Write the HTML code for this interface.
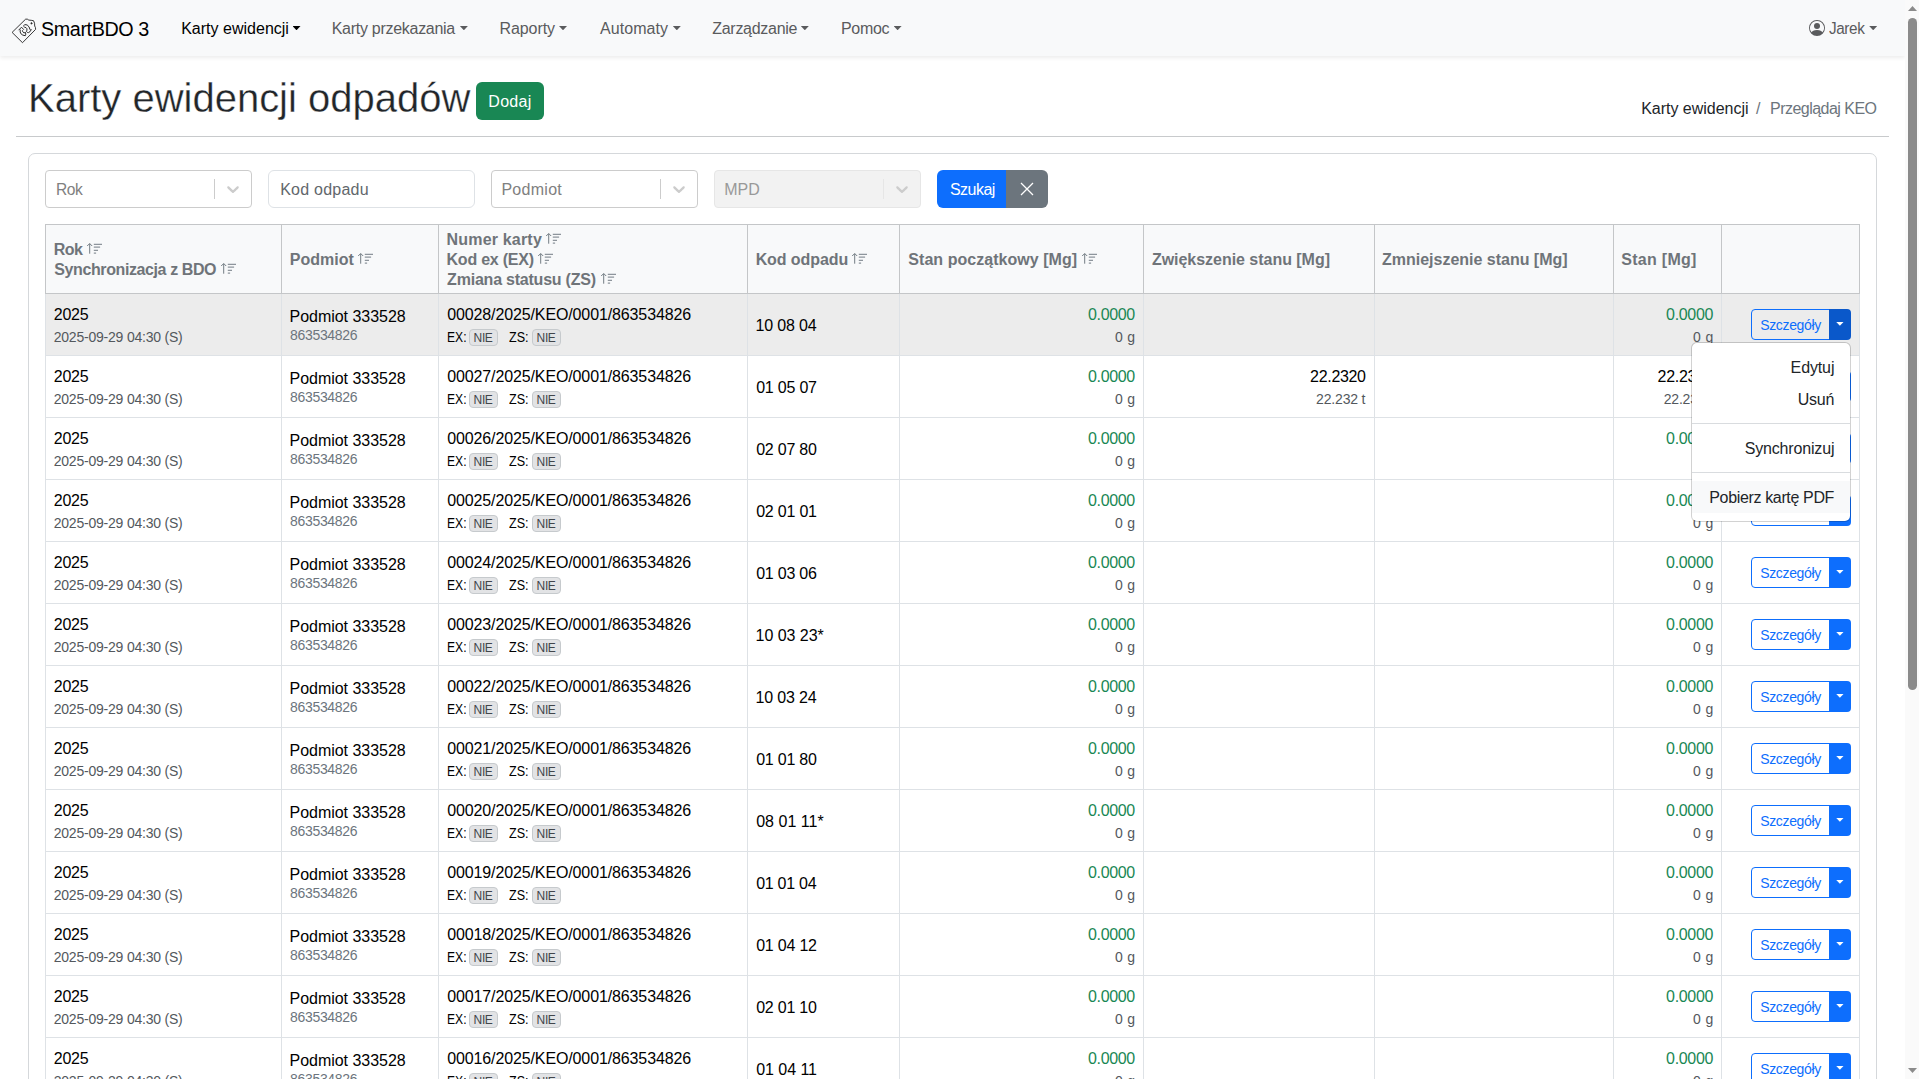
<!DOCTYPE html>
<html lang="pl"><head><meta charset="utf-8"><title>SmartBDO 3</title>
<style>
*{box-sizing:border-box}
html,body{margin:0;padding:0}
body{width:1919px;height:1079px;overflow:hidden;position:relative;background:#fff;font-family:"Liberation Sans",Arial,sans-serif;font-size:16px;color:#212529;line-height:1.5}
.t{position:absolute;white-space:nowrap}
.nav{position:absolute;left:0;top:0;width:1905px;height:56px;background:#f8f9fa;box-shadow:0 2px 4px rgba(0,0,0,.075)}
.nav .t{color:#5a5b5d}
.nav .brand{color:#000}
.nav .act{color:#000}
.car{position:absolute;top:26px;width:8px;height:4.2px;background:#5a5b5d;clip-path:polygon(0 0,100% 0,50% 100%)}
.car.act{background:#000}
.logo{position:absolute;left:0;top:0;width:48px;height:56px}
.usr{position:absolute;left:1809px;top:20px;width:16px;height:16px;fill:#5a5b5d}
h1{margin:0;font-weight:400;color:#212529;-webkit-text-stroke:.35px #fff}
.dodaj{position:absolute;left:476px;top:82px;width:68px;height:38px;background:#198754;border-radius:6px;color:#fff}
.dodaj .t{color:#fff}
.bc .t{color:#6c757d}
.bc .b{color:#212529}
.hr{position:absolute;left:16px;top:136px;width:1873px;height:1px;background:#c8cacc}
.card{position:absolute;left:28px;top:153px;width:1849px;height:960px;border:1px solid #d5d8db;border-radius:7px;background:#fff}
.f{position:absolute;top:170px;height:38px;width:207px;border:1px solid #ccc;border-radius:4px;background:#fff}
.f .t{color:#808080}
.f.inp{border-color:#dee2e6;border-radius:6px}
.f.inp .t{color:#62676c}
.f.dis{background:#f2f2f2;border-color:#e6e6e6}
.f.dis .t{color:#999}
.f .sep{position:absolute;left:168px;top:8px;width:1px;height:20px;background:#ccc}
.f.dis .sep{background:#e6e6e6}
.f svg{position:absolute;left:177px;top:8px;width:20px;height:20px;fill:#ccc}
.f.dis svg{fill:#ccc}
.szukaj{position:absolute;left:937px;top:170px;width:70px;height:38px;background:#0d6efd;border-radius:6px 0 0 6px}
.szukaj .t{color:#fff}
.xbtn{position:absolute;left:1006px;top:170px;width:42px;height:38px;background:#6c757d;border-radius:0 6px 6px 0}
.xbtn svg{position:absolute;left:13px;top:11px;width:16px;height:16px}
table{position:absolute;left:45px;top:224px;border-collapse:collapse;table-layout:fixed}
th,td{border:1px solid #dee2e6;padding:0;position:relative;text-align:left;font-weight:400;color:#000}
th{height:69px;background:#f8f9fa;border-color:#c4c6c8}
th .t{color:#6f7479;font-weight:700}
td{height:62px}
tr.hov td{background:#ececec}
.si{position:absolute;width:16px;height:12px;fill:none;stroke:#6c757d;stroke-width:.95}
.m{color:#53585d}
.m2{color:#6c757d}
.g{color:#198754}
.k{color:#000}
.bd{position:absolute;width:28.6px;height:16.4px;border:1px solid #c6cacd;background:#e2e3e5;border-radius:4px}
.bt{color:#41464b}
.bl{position:absolute;width:79px;height:31px;border:1px solid #0d6efd;border-radius:4px 0 0 4px;background:#fff}
.bl-t{color:#0d6efd}
.br{position:absolute;width:22px;height:31px;background:#0d6efd;border-radius:0 4px 4px 0}
.br i{position:absolute;left:6.8px;top:12.6px;width:8.2px;height:4.2px;background:#fff;clip-path:polygon(0 0,100% 0,50% 100%)}
tr.hov .br{background:#0a58ca}
tr.hov .bl{background:#ececec}
.menu{position:absolute;left:1691px;top:342px;width:160px;height:180px;background:#fff;background-clip:padding-box;border:1px solid rgba(0,0,0,.175);border-radius:6px}
.menu hr{position:absolute;left:0;width:158px;margin:0;border:0;border-top:1px solid #d9dcdf}
.menu .hl{position:absolute;left:0;top:138px;width:158px;height:32px;background:#f8f9fa}
.sb{position:absolute;left:1905px;top:0;width:14px;height:1079px;background:#fafafa}
.sb .th{position:absolute;left:3px;top:18px;width:9px;height:672px;border-radius:5px;background:#8b8b8b}
.sb .up{position:absolute;left:3px;top:6px;width:9px;height:5px;background:#8b8b8b;clip-path:polygon(50% 0,100% 100%,0 100%)}
.sb .dn{position:absolute;left:3px;top:1068px;width:9px;height:5px;background:#8b8b8b;clip-path:polygon(0 0,100% 0,50% 100%)}
</style></head><body>
<div class="nav">
<svg class="logo" viewBox="0 0 48 56" fill="none" stroke="#222" stroke-width=".9" stroke-linejoin="round"><path d="M12.1 32.4 25.6 19.2q1.8-.6 3.2 .9 2.4 .1 4.7 .6 1.500 2.400 1.200 5.300 1.100 1.500 .9 3.400L22.500 42.700z"/><path d="M30.600 23.300l.9-.9 .9 .9-.9 .9z" fill="#222" stroke-width=".6"/><path d="M18.600 30.200 21.500 27.200l2.300 2.500M20.200 29.600q-.3 2.600 .6 4.000 1.800 2.000 4.500 2.100 .8-1.400 .2-3.300M22.400 30.300q.1 1.800 1.500 2.600l1.600-.4M23.800 26.700q-.2-1.600 .9-2.100 2.700-.4 4.300 2.200l.8 2.200 .9 1.400M31.400 29.300l-.7 1.100q-.6 1.700-2.200 2.200-1.300 .1-2.000-1.100M24.300 27.200q2.200 .2 2.600 1.500 .3 1.500-.5 2.800" stroke-width=".95"/></svg>
<span class="t brand" style="left:41.3px;top:14px;letter-spacing:-0.4px;font-size:20px;line-height:30px;transform-origin:0 0;transform:scaleX(0.987);">SmartBDO 3</span>
<span class="t act" style="left:181.19px;top:17px;letter-spacing:0.01px;line-height:24px;">Karty ewidencji</span>
<i class="car act" style="left:292.5px"></i>
<span class="t" style="left:331.69px;top:17px;letter-spacing:-0.28px;line-height:24px;">Karty przekazania</span>
<i class="car" style="left:459.9px"></i>
<span class="t" style="left:499.49px;top:17px;letter-spacing:-0.08px;line-height:24px;">Raporty</span>
<i class="car" style="left:559px"></i>
<span class="t" style="left:599.97px;top:17px;letter-spacing:0.07px;line-height:24px;">Automaty</span>
<i class="car" style="left:672.8px"></i>
<span class="t" style="left:712.29px;top:17px;letter-spacing:-0.29px;line-height:24px;">Zarządzanie</span>
<i class="car" style="left:800.8px"></i>
<span class="t" style="left:840.89px;top:17px;letter-spacing:-0.27px;line-height:24px;">Pomoc</span>
<i class="car" style="left:893.6px"></i>
<span class="t" style="left:1829.16px;top:17px;letter-spacing:-0.4px;line-height:24px;transform-origin:0 0;transform:scaleX(0.954);">Jarek</span>
<i class="car" style="left:1869.2px"></i>
<svg class="usr" viewBox="0 0 16 16"><path d="M11 6a3 3 0 1 1-6 0 3 3 0 0 1 6 0"/><path fill-rule="evenodd" d="M0 8a8 8 0 1 1 16 0A8 8 0 0 1 0 8m8-7a7 7 0 0 0-5.468 11.37C3.242 11.226 4.805 10 8 10s4.757 1.225 5.468 2.37A7 7 0 0 0 8 1"/></svg>
</div>
<h1 class="t" style="left:28.02px;top:74px;letter-spacing:-0.01px;font-size:40px;line-height:48px;">Karty ewidencji odpadów</h1>
<div class="dodaj"><span class="t" style="left:12.29px;top:8px;letter-spacing:0.3px;line-height:24px;">Dodaj</span></div>
<div class="bc"><span class="t b" style="left:1641.19px;top:97px;letter-spacing:-0.02px;line-height:24px;">Karty ewidencji</span><span class="t" style="left:1755.9px;top:97px;letter-spacing:0px;line-height:24px;">/</span><span class="t" style="left:1769.99px;top:97px;letter-spacing:-0.52px;line-height:24px;">Przeglądaj KEO</span></div>
<div class="hr"></div>
<div class="card"></div>
<div class="f" style="left:45px"><span class="t" style="left:9.63px;top:7px;letter-spacing:-0.4px;line-height:24px;transform-origin:0 0;transform:scaleX(0.971);">Rok</span><span class="sep"></span><svg viewBox="0 0 20 20"><path d="M4.516 7.548c0.436-0.446 1.043-0.481 1.576 0l3.908 3.747 3.908-3.747c0.533-0.481 1.141-0.446 1.574 0 0.436 0.445 0.408 1.197 0 1.615-0.406 0.418-4.695 4.502-4.695 4.502-0.217 0.223-0.502 0.335-0.787 0.335s-0.57-0.112-0.789-0.335c0 0-4.287-4.084-4.695-4.502s-0.436-1.17 0-1.615z"/></svg></div>
<div class="f inp" style="left:268px"><span class="t" style="left:11.19px;top:7px;letter-spacing:0.23px;line-height:24px;">Kod odpadu</span></div>
<div class="f" style="left:491px"><span class="t" style="left:9.39px;top:7px;letter-spacing:0.29px;line-height:24px;">Podmiot</span><span class="sep"></span><svg viewBox="0 0 20 20"><path d="M4.516 7.548c0.436-0.446 1.043-0.481 1.576 0l3.908 3.747 3.908-3.747c0.533-0.481 1.141-0.446 1.574 0 0.436 0.445 0.408 1.197 0 1.615-0.406 0.418-4.695 4.502-4.695 4.502-0.217 0.223-0.502 0.335-0.787 0.335s-0.57-0.112-0.789-0.335c0 0-4.287-4.084-4.695-4.502s-0.436-1.17 0-1.615z"/></svg></div>
<div class="f dis" style="left:714px"><span class="t" style="left:9.19px;top:7px;letter-spacing:0.01px;line-height:24px;">MPD</span><span class="sep"></span><svg viewBox="0 0 20 20"><path d="M4.516 7.548c0.436-0.446 1.043-0.481 1.576 0l3.908 3.747 3.908-3.747c0.533-0.481 1.141-0.446 1.574 0 0.436 0.445 0.408 1.197 0 1.615-0.406 0.418-4.695 4.502-4.695 4.502-0.217 0.223-0.502 0.335-0.787 0.335s-0.57-0.112-0.789-0.335c0 0-4.287-4.084-4.695-4.502s-0.436-1.17 0-1.615z"/></svg></div>
<div class="szukaj"><span class="t" style="left:12.97px;top:8px;letter-spacing:-0.54px;line-height:24px;">Szukaj</span></div>
<div class="xbtn"><svg viewBox="0 0 16 16" stroke="#fff" stroke-width="1.3" fill="none"><path d="M2 2l12 12M14 2 2 14"/></svg></div>
<table>
<colgroup><col style="width:236px"><col style="width:157px"><col style="width:309px"><col style="width:152px"><col style="width:244px"><col style="width:231px"><col style="width:239px"><col style="width:108px"><col style="width:138px"></colgroup>
<thead><tr><th><span class="t" style="left:7.73px;top:15px;letter-spacing:-0.54px;line-height:20px;">Rok</span><svg class="si" viewBox="0 0 16 12" style="left:40.9px;top:18.3px"><path d="M2.7 10.7V.8M.2 3 2.7 .5 5.2 3M6.8 1.3H15M6.8 4.1h6.3M6.8 7.3H11M6.8 10.1h2.3"/></svg><span class="t" style="left:8.34px;top:35px;letter-spacing:-0.4px;line-height:20px;">Synchronizacja z BDO</span><svg class="si" viewBox="0 0 16 12" style="left:174.7px;top:38.3px"><path d="M2.7 10.7V.8M.2 3 2.7 .5 5.2 3M6.8 1.3H15M6.8 4.1h6.3M6.8 7.3H11M6.8 10.1h2.3"/></svg></th><th><span class="t" style="left:7.73px;top:25px;letter-spacing:0.03px;line-height:20px;">Podmiot</span><svg class="si" viewBox="0 0 16 12" style="left:76.2px;top:28.3px"><path d="M2.7 10.7V.8M.2 3 2.7 .5 5.2 3M6.8 1.3H15M6.8 4.1h6.3M6.8 7.3H11M6.8 10.1h2.3"/></svg></th><th><span class="t" style="left:7.53px;top:5px;letter-spacing:0.19px;line-height:20px;">Numer karty</span><svg class="si" viewBox="0 0 16 12" style="left:107.3px;top:8.3px"><path d="M2.7 10.7V.8M.2 3 2.7 .5 5.2 3M6.8 1.3H15M6.8 4.1h6.3M6.8 7.3H11M6.8 10.1h2.3"/></svg><span class="t" style="left:7.53px;top:25px;letter-spacing:-0.22px;line-height:20px;">Kod ex (EX)</span><svg class="si" viewBox="0 0 16 12" style="left:99.2px;top:28.3px"><path d="M2.7 10.7V.8M.2 3 2.7 .5 5.2 3M6.8 1.3H15M6.8 4.1h6.3M6.8 7.3H11M6.8 10.1h2.3"/></svg><span class="t" style="left:8.12px;top:45px;letter-spacing:-0.22px;line-height:20px;">Zmiana statusu (ZS)</span><svg class="si" viewBox="0 0 16 12" style="left:161.7px;top:48.3px"><path d="M2.7 10.7V.8M.2 3 2.7 .5 5.2 3M6.8 1.3H15M6.8 4.1h6.3M6.8 7.3H11M6.8 10.1h2.3"/></svg></th><th><span class="t" style="left:7.63px;top:25px;letter-spacing:-0.08px;line-height:20px;">Kod odpadu</span><svg class="si" viewBox="0 0 16 12" style="left:104px;top:28.3px"><path d="M2.7 10.7V.8M.2 3 2.7 .5 5.2 3M6.8 1.3H15M6.8 4.1h6.3M6.8 7.3H11M6.8 10.1h2.3"/></svg></th><th><span class="t" style="left:8.34px;top:25px;letter-spacing:0.04px;line-height:20px;">Stan początkowy [Mg]</span><svg class="si" viewBox="0 0 16 12" style="left:182px;top:28.3px"><path d="M2.7 10.7V.8M.2 3 2.7 .5 5.2 3M6.8 1.3H15M6.8 4.1h6.3M6.8 7.3H11M6.8 10.1h2.3"/></svg></th><th><span class="t" style="left:7.92px;top:25px;letter-spacing:-0.03px;line-height:20px;">Zwiększenie stanu [Mg]</span></th><th><span class="t" style="left:7.02px;top:25px;letter-spacing:-0.01px;line-height:20px;">Zmniejszenie stanu [Mg]</span></th><th><span class="t" style="left:7.34px;top:25px;letter-spacing:0.27px;line-height:20px;">Stan [Mg]</span></th><th></th></tr></thead>
<tbody>
<tr class="hov"><td><span class="t" style="left:7.8px;top:9px;letter-spacing:-0.24px;line-height:24px;">2025</span><span class="t m" style="left:7.7px;top:33px;letter-spacing:-0.21px;font-size:14px;line-height:20px;">2025-09-29 04:30 (S)</span></td><td><span class="t" style="left:7.49px;top:11px;letter-spacing:-0.02px;line-height:24px;">Podmiot 333528</span><span class="t m2" style="left:7.99px;top:31px;letter-spacing:-0.31px;font-size:14px;line-height:20px;">863534826</span></td><td><span class="t" style="left:8.18px;top:9px;letter-spacing:-0.12px;line-height:24px;">00028/2025/KEO/0001/863534826</span><span class="t" style="left:7.81px;top:33px;font-size:14px;line-height:20px;transform-origin:0 0;transform:scaleX(0.864)">EX:</span><span class="bd" style="left:30.1px;top:35.4px"></span><span class="t bt" style="left:34.62px;top:36px;letter-spacing:-0.4px;font-size:12px;line-height:16px;">NIE</span><span class="t" style="left:70.3px;top:33px;font-size:14px;line-height:20px;transform-origin:0 0;transform:scaleX(0.897)">ZS:</span><span class="bd" style="left:93.1px;top:35.4px"></span><span class="t bt" style="left:97.62px;top:36px;letter-spacing:-0.4px;font-size:12px;line-height:16px;">NIE</span></td><td><span class="t" style="left:7.58px;top:20px;letter-spacing:-0.17px;line-height:24px;">10 08 04</span></td><td><span class="t g" style="left:187.97px;top:9px;letter-spacing:-0.34px;line-height:24px;">0.0000</span><span class="t m" style="left:214.95px;top:33px;letter-spacing:0.29px;font-size:14px;line-height:20px;">0 g</span></td><td></td><td></td><td><span class="t g" style="left:52.08px;top:9px;letter-spacing:-0.32px;line-height:24px;">0.0000</span><span class="t m" style="left:79.05px;top:33px;letter-spacing:0.34px;font-size:14px;line-height:20px;">0 g</span></td><td><span class="bl" style="left:29px;top:15px"></span><span class="br" style="left:107px;top:15px"><i></i></span><span class="t bl-t" style="left:38.26px;top:21px;letter-spacing:-0.36px;font-size:14px;line-height:21px;">Szczegóły</span></td></tr>
<tr><td><span class="t" style="left:7.8px;top:9px;letter-spacing:-0.24px;line-height:24px;">2025</span><span class="t m" style="left:7.7px;top:33px;letter-spacing:-0.21px;font-size:14px;line-height:20px;">2025-09-29 04:30 (S)</span></td><td><span class="t" style="left:7.49px;top:11px;letter-spacing:-0.02px;line-height:24px;">Podmiot 333528</span><span class="t m2" style="left:7.99px;top:31px;letter-spacing:-0.31px;font-size:14px;line-height:20px;">863534826</span></td><td><span class="t" style="left:8.18px;top:9px;letter-spacing:-0.12px;line-height:24px;">00027/2025/KEO/0001/863534826</span><span class="t" style="left:7.81px;top:33px;font-size:14px;line-height:20px;transform-origin:0 0;transform:scaleX(0.864)">EX:</span><span class="bd" style="left:30.1px;top:35.4px"></span><span class="t bt" style="left:34.62px;top:36px;letter-spacing:-0.4px;font-size:12px;line-height:16px;">NIE</span><span class="t" style="left:70.3px;top:33px;font-size:14px;line-height:20px;transform-origin:0 0;transform:scaleX(0.897)">ZS:</span><span class="bd" style="left:93.1px;top:35.4px"></span><span class="t bt" style="left:97.62px;top:36px;letter-spacing:-0.4px;font-size:12px;line-height:16px;">NIE</span></td><td><span class="t" style="left:8.17px;top:20px;letter-spacing:-0.21px;line-height:24px;">01 05 07</span></td><td><span class="t g" style="left:187.97px;top:9px;letter-spacing:-0.34px;line-height:24px;">0.0000</span><span class="t m" style="left:214.95px;top:33px;letter-spacing:0.29px;font-size:14px;line-height:20px;">0 g</span></td><td><span class="t k" style="left:166.1px;top:9px;letter-spacing:-0.32px;line-height:24px;">22.2320</span><span class="t m" style="left:172.1px;top:33px;letter-spacing:-0.17px;font-size:14px;line-height:20px;">22.232 t</span></td><td></td><td><span class="t k" style="left:43.6px;top:9px;letter-spacing:-0.32px;line-height:24px;">22.2320</span><span class="t m" style="left:49.7px;top:33px;letter-spacing:-0.18px;font-size:14px;line-height:20px;">22.232 t</span></td><td><span class="bl" style="left:29px;top:15px"></span><span class="br" style="left:107px;top:15px"><i></i></span><span class="t bl-t" style="left:38.26px;top:21px;letter-spacing:-0.36px;font-size:14px;line-height:21px;">Szczegóły</span></td></tr>
<tr><td><span class="t" style="left:7.8px;top:9px;letter-spacing:-0.24px;line-height:24px;">2025</span><span class="t m" style="left:7.7px;top:33px;letter-spacing:-0.21px;font-size:14px;line-height:20px;">2025-09-29 04:30 (S)</span></td><td><span class="t" style="left:7.49px;top:11px;letter-spacing:-0.02px;line-height:24px;">Podmiot 333528</span><span class="t m2" style="left:7.99px;top:31px;letter-spacing:-0.31px;font-size:14px;line-height:20px;">863534826</span></td><td><span class="t" style="left:8.18px;top:9px;letter-spacing:-0.12px;line-height:24px;">00026/2025/KEO/0001/863534826</span><span class="t" style="left:7.81px;top:33px;font-size:14px;line-height:20px;transform-origin:0 0;transform:scaleX(0.864)">EX:</span><span class="bd" style="left:30.1px;top:35.4px"></span><span class="t bt" style="left:34.62px;top:36px;letter-spacing:-0.4px;font-size:12px;line-height:16px;">NIE</span><span class="t" style="left:70.3px;top:33px;font-size:14px;line-height:20px;transform-origin:0 0;transform:scaleX(0.897)">ZS:</span><span class="bd" style="left:93.1px;top:35.4px"></span><span class="t bt" style="left:97.62px;top:36px;letter-spacing:-0.4px;font-size:12px;line-height:16px;">NIE</span></td><td><span class="t" style="left:8.17px;top:20px;letter-spacing:-0.23px;line-height:24px;">02 07 80</span></td><td><span class="t g" style="left:187.97px;top:9px;letter-spacing:-0.34px;line-height:24px;">0.0000</span><span class="t m" style="left:214.95px;top:33px;letter-spacing:0.29px;font-size:14px;line-height:20px;">0 g</span></td><td></td><td></td><td><span class="t g" style="left:52.08px;top:9px;letter-spacing:-0.32px;line-height:24px;">0.0000</span><span class="t m" style="left:79.05px;top:33px;letter-spacing:0.34px;font-size:14px;line-height:20px;">0 g</span></td><td><span class="bl" style="left:29px;top:15px"></span><span class="br" style="left:107px;top:15px"><i></i></span><span class="t bl-t" style="left:38.26px;top:21px;letter-spacing:-0.36px;font-size:14px;line-height:21px;">Szczegóły</span></td></tr>
<tr><td><span class="t" style="left:7.8px;top:9px;letter-spacing:-0.24px;line-height:24px;">2025</span><span class="t m" style="left:7.7px;top:33px;letter-spacing:-0.21px;font-size:14px;line-height:20px;">2025-09-29 04:30 (S)</span></td><td><span class="t" style="left:7.49px;top:11px;letter-spacing:-0.02px;line-height:24px;">Podmiot 333528</span><span class="t m2" style="left:7.99px;top:31px;letter-spacing:-0.31px;font-size:14px;line-height:20px;">863534826</span></td><td><span class="t" style="left:8.18px;top:9px;letter-spacing:-0.12px;line-height:24px;">00025/2025/KEO/0001/863534826</span><span class="t" style="left:7.81px;top:33px;font-size:14px;line-height:20px;transform-origin:0 0;transform:scaleX(0.864)">EX:</span><span class="bd" style="left:30.1px;top:35.4px"></span><span class="t bt" style="left:34.62px;top:36px;letter-spacing:-0.4px;font-size:12px;line-height:16px;">NIE</span><span class="t" style="left:70.3px;top:33px;font-size:14px;line-height:20px;transform-origin:0 0;transform:scaleX(0.897)">ZS:</span><span class="bd" style="left:93.1px;top:35.4px"></span><span class="t bt" style="left:97.62px;top:36px;letter-spacing:-0.4px;font-size:12px;line-height:16px;">NIE</span></td><td><span class="t" style="left:8.17px;top:20px;letter-spacing:-0.21px;line-height:24px;">02 01 01</span></td><td><span class="t g" style="left:187.97px;top:9px;letter-spacing:-0.34px;line-height:24px;">0.0000</span><span class="t m" style="left:214.95px;top:33px;letter-spacing:0.29px;font-size:14px;line-height:20px;">0 g</span></td><td></td><td></td><td><span class="t g" style="left:52.08px;top:9px;letter-spacing:-0.32px;line-height:24px;">0.0000</span><span class="t m" style="left:79.05px;top:33px;letter-spacing:0.34px;font-size:14px;line-height:20px;">0 g</span></td><td><span class="bl" style="left:29px;top:15px"></span><span class="br" style="left:107px;top:15px"><i></i></span><span class="t bl-t" style="left:38.26px;top:21px;letter-spacing:-0.36px;font-size:14px;line-height:21px;">Szczegóły</span></td></tr>
<tr><td><span class="t" style="left:7.8px;top:9px;letter-spacing:-0.24px;line-height:24px;">2025</span><span class="t m" style="left:7.7px;top:33px;letter-spacing:-0.21px;font-size:14px;line-height:20px;">2025-09-29 04:30 (S)</span></td><td><span class="t" style="left:7.49px;top:11px;letter-spacing:-0.02px;line-height:24px;">Podmiot 333528</span><span class="t m2" style="left:7.99px;top:31px;letter-spacing:-0.31px;font-size:14px;line-height:20px;">863534826</span></td><td><span class="t" style="left:8.18px;top:9px;letter-spacing:-0.12px;line-height:24px;">00024/2025/KEO/0001/863534826</span><span class="t" style="left:7.81px;top:33px;font-size:14px;line-height:20px;transform-origin:0 0;transform:scaleX(0.864)">EX:</span><span class="bd" style="left:30.1px;top:35.4px"></span><span class="t bt" style="left:34.62px;top:36px;letter-spacing:-0.4px;font-size:12px;line-height:16px;">NIE</span><span class="t" style="left:70.3px;top:33px;font-size:14px;line-height:20px;transform-origin:0 0;transform:scaleX(0.897)">ZS:</span><span class="bd" style="left:93.1px;top:35.4px"></span><span class="t bt" style="left:97.62px;top:36px;letter-spacing:-0.4px;font-size:12px;line-height:16px;">NIE</span></td><td><span class="t" style="left:8.17px;top:20px;letter-spacing:-0.22px;line-height:24px;">01 03 06</span></td><td><span class="t g" style="left:187.97px;top:9px;letter-spacing:-0.34px;line-height:24px;">0.0000</span><span class="t m" style="left:214.95px;top:33px;letter-spacing:0.29px;font-size:14px;line-height:20px;">0 g</span></td><td></td><td></td><td><span class="t g" style="left:52.08px;top:9px;letter-spacing:-0.32px;line-height:24px;">0.0000</span><span class="t m" style="left:79.05px;top:33px;letter-spacing:0.34px;font-size:14px;line-height:20px;">0 g</span></td><td><span class="bl" style="left:29px;top:15px"></span><span class="br" style="left:107px;top:15px"><i></i></span><span class="t bl-t" style="left:38.26px;top:21px;letter-spacing:-0.36px;font-size:14px;line-height:21px;">Szczegóły</span></td></tr>
<tr><td><span class="t" style="left:7.8px;top:9px;letter-spacing:-0.24px;line-height:24px;">2025</span><span class="t m" style="left:7.7px;top:33px;letter-spacing:-0.21px;font-size:14px;line-height:20px;">2025-09-29 04:30 (S)</span></td><td><span class="t" style="left:7.49px;top:11px;letter-spacing:-0.02px;line-height:24px;">Podmiot 333528</span><span class="t m2" style="left:7.99px;top:31px;letter-spacing:-0.31px;font-size:14px;line-height:20px;">863534826</span></td><td><span class="t" style="left:8.18px;top:9px;letter-spacing:-0.12px;line-height:24px;">00023/2025/KEO/0001/863534826</span><span class="t" style="left:7.81px;top:33px;font-size:14px;line-height:20px;transform-origin:0 0;transform:scaleX(0.864)">EX:</span><span class="bd" style="left:30.1px;top:35.4px"></span><span class="t bt" style="left:34.62px;top:36px;letter-spacing:-0.4px;font-size:12px;line-height:16px;">NIE</span><span class="t" style="left:70.3px;top:33px;font-size:14px;line-height:20px;transform-origin:0 0;transform:scaleX(0.897)">ZS:</span><span class="bd" style="left:93.1px;top:35.4px"></span><span class="t bt" style="left:97.62px;top:36px;letter-spacing:-0.4px;font-size:12px;line-height:16px;">NIE</span></td><td><span class="t" style="left:7.58px;top:20px;letter-spacing:-0.04px;line-height:24px;">10 03 23*</span></td><td><span class="t g" style="left:187.97px;top:9px;letter-spacing:-0.34px;line-height:24px;">0.0000</span><span class="t m" style="left:214.95px;top:33px;letter-spacing:0.29px;font-size:14px;line-height:20px;">0 g</span></td><td></td><td></td><td><span class="t g" style="left:52.08px;top:9px;letter-spacing:-0.32px;line-height:24px;">0.0000</span><span class="t m" style="left:79.05px;top:33px;letter-spacing:0.34px;font-size:14px;line-height:20px;">0 g</span></td><td><span class="bl" style="left:29px;top:15px"></span><span class="br" style="left:107px;top:15px"><i></i></span><span class="t bl-t" style="left:38.26px;top:21px;letter-spacing:-0.36px;font-size:14px;line-height:21px;">Szczegóły</span></td></tr>
<tr><td><span class="t" style="left:7.8px;top:9px;letter-spacing:-0.24px;line-height:24px;">2025</span><span class="t m" style="left:7.7px;top:33px;letter-spacing:-0.21px;font-size:14px;line-height:20px;">2025-09-29 04:30 (S)</span></td><td><span class="t" style="left:7.49px;top:11px;letter-spacing:-0.02px;line-height:24px;">Podmiot 333528</span><span class="t m2" style="left:7.99px;top:31px;letter-spacing:-0.31px;font-size:14px;line-height:20px;">863534826</span></td><td><span class="t" style="left:8.18px;top:9px;letter-spacing:-0.12px;line-height:24px;">00022/2025/KEO/0001/863534826</span><span class="t" style="left:7.81px;top:33px;font-size:14px;line-height:20px;transform-origin:0 0;transform:scaleX(0.864)">EX:</span><span class="bd" style="left:30.1px;top:35.4px"></span><span class="t bt" style="left:34.62px;top:36px;letter-spacing:-0.4px;font-size:12px;line-height:16px;">NIE</span><span class="t" style="left:70.3px;top:33px;font-size:14px;line-height:20px;transform-origin:0 0;transform:scaleX(0.897)">ZS:</span><span class="bd" style="left:93.1px;top:35.4px"></span><span class="t bt" style="left:97.62px;top:36px;letter-spacing:-0.4px;font-size:12px;line-height:16px;">NIE</span></td><td><span class="t" style="left:7.58px;top:20px;letter-spacing:-0.17px;line-height:24px;">10 03 24</span></td><td><span class="t g" style="left:187.97px;top:9px;letter-spacing:-0.34px;line-height:24px;">0.0000</span><span class="t m" style="left:214.95px;top:33px;letter-spacing:0.29px;font-size:14px;line-height:20px;">0 g</span></td><td></td><td></td><td><span class="t g" style="left:52.08px;top:9px;letter-spacing:-0.32px;line-height:24px;">0.0000</span><span class="t m" style="left:79.05px;top:33px;letter-spacing:0.34px;font-size:14px;line-height:20px;">0 g</span></td><td><span class="bl" style="left:29px;top:15px"></span><span class="br" style="left:107px;top:15px"><i></i></span><span class="t bl-t" style="left:38.26px;top:21px;letter-spacing:-0.36px;font-size:14px;line-height:21px;">Szczegóły</span></td></tr>
<tr><td><span class="t" style="left:7.8px;top:9px;letter-spacing:-0.24px;line-height:24px;">2025</span><span class="t m" style="left:7.7px;top:33px;letter-spacing:-0.21px;font-size:14px;line-height:20px;">2025-09-29 04:30 (S)</span></td><td><span class="t" style="left:7.49px;top:11px;letter-spacing:-0.02px;line-height:24px;">Podmiot 333528</span><span class="t m2" style="left:7.99px;top:31px;letter-spacing:-0.31px;font-size:14px;line-height:20px;">863534826</span></td><td><span class="t" style="left:8.18px;top:9px;letter-spacing:-0.12px;line-height:24px;">00021/2025/KEO/0001/863534826</span><span class="t" style="left:7.81px;top:33px;font-size:14px;line-height:20px;transform-origin:0 0;transform:scaleX(0.864)">EX:</span><span class="bd" style="left:30.1px;top:35.4px"></span><span class="t bt" style="left:34.62px;top:36px;letter-spacing:-0.4px;font-size:12px;line-height:16px;">NIE</span><span class="t" style="left:70.3px;top:33px;font-size:14px;line-height:20px;transform-origin:0 0;transform:scaleX(0.897)">ZS:</span><span class="bd" style="left:93.1px;top:35.4px"></span><span class="t bt" style="left:97.62px;top:36px;letter-spacing:-0.4px;font-size:12px;line-height:16px;">NIE</span></td><td><span class="t" style="left:8.17px;top:20px;letter-spacing:-0.23px;line-height:24px;">01 01 80</span></td><td><span class="t g" style="left:187.97px;top:9px;letter-spacing:-0.34px;line-height:24px;">0.0000</span><span class="t m" style="left:214.95px;top:33px;letter-spacing:0.29px;font-size:14px;line-height:20px;">0 g</span></td><td></td><td></td><td><span class="t g" style="left:52.08px;top:9px;letter-spacing:-0.32px;line-height:24px;">0.0000</span><span class="t m" style="left:79.05px;top:33px;letter-spacing:0.34px;font-size:14px;line-height:20px;">0 g</span></td><td><span class="bl" style="left:29px;top:15px"></span><span class="br" style="left:107px;top:15px"><i></i></span><span class="t bl-t" style="left:38.26px;top:21px;letter-spacing:-0.36px;font-size:14px;line-height:21px;">Szczegóły</span></td></tr>
<tr><td><span class="t" style="left:7.8px;top:9px;letter-spacing:-0.24px;line-height:24px;">2025</span><span class="t m" style="left:7.7px;top:33px;letter-spacing:-0.21px;font-size:14px;line-height:20px;">2025-09-29 04:30 (S)</span></td><td><span class="t" style="left:7.49px;top:11px;letter-spacing:-0.02px;line-height:24px;">Podmiot 333528</span><span class="t m2" style="left:7.99px;top:31px;letter-spacing:-0.31px;font-size:14px;line-height:20px;">863534826</span></td><td><span class="t" style="left:8.18px;top:9px;letter-spacing:-0.12px;line-height:24px;">00020/2025/KEO/0001/863534826</span><span class="t" style="left:7.81px;top:33px;font-size:14px;line-height:20px;transform-origin:0 0;transform:scaleX(0.864)">EX:</span><span class="bd" style="left:30.1px;top:35.4px"></span><span class="t bt" style="left:34.62px;top:36px;letter-spacing:-0.4px;font-size:12px;line-height:16px;">NIE</span><span class="t" style="left:70.3px;top:33px;font-size:14px;line-height:20px;transform-origin:0 0;transform:scaleX(0.897)">ZS:</span><span class="bd" style="left:93.1px;top:35.4px"></span><span class="t bt" style="left:97.62px;top:36px;letter-spacing:-0.4px;font-size:12px;line-height:16px;">NIE</span></td><td><span class="t" style="left:8.17px;top:20px;letter-spacing:0.03px;line-height:24px;">08 01 11*</span></td><td><span class="t g" style="left:187.97px;top:9px;letter-spacing:-0.34px;line-height:24px;">0.0000</span><span class="t m" style="left:214.95px;top:33px;letter-spacing:0.29px;font-size:14px;line-height:20px;">0 g</span></td><td></td><td></td><td><span class="t g" style="left:52.08px;top:9px;letter-spacing:-0.32px;line-height:24px;">0.0000</span><span class="t m" style="left:79.05px;top:33px;letter-spacing:0.34px;font-size:14px;line-height:20px;">0 g</span></td><td><span class="bl" style="left:29px;top:15px"></span><span class="br" style="left:107px;top:15px"><i></i></span><span class="t bl-t" style="left:38.26px;top:21px;letter-spacing:-0.36px;font-size:14px;line-height:21px;">Szczegóły</span></td></tr>
<tr><td><span class="t" style="left:7.8px;top:9px;letter-spacing:-0.24px;line-height:24px;">2025</span><span class="t m" style="left:7.7px;top:33px;letter-spacing:-0.21px;font-size:14px;line-height:20px;">2025-09-29 04:30 (S)</span></td><td><span class="t" style="left:7.49px;top:11px;letter-spacing:-0.02px;line-height:24px;">Podmiot 333528</span><span class="t m2" style="left:7.99px;top:31px;letter-spacing:-0.31px;font-size:14px;line-height:20px;">863534826</span></td><td><span class="t" style="left:8.18px;top:9px;letter-spacing:-0.12px;line-height:24px;">00019/2025/KEO/0001/863534826</span><span class="t" style="left:7.81px;top:33px;font-size:14px;line-height:20px;transform-origin:0 0;transform:scaleX(0.864)">EX:</span><span class="bd" style="left:30.1px;top:35.4px"></span><span class="t bt" style="left:34.62px;top:36px;letter-spacing:-0.4px;font-size:12px;line-height:16px;">NIE</span><span class="t" style="left:70.3px;top:33px;font-size:14px;line-height:20px;transform-origin:0 0;transform:scaleX(0.897)">ZS:</span><span class="bd" style="left:93.1px;top:35.4px"></span><span class="t bt" style="left:97.62px;top:36px;letter-spacing:-0.4px;font-size:12px;line-height:16px;">NIE</span></td><td><span class="t" style="left:8.17px;top:20px;letter-spacing:-0.26px;line-height:24px;">01 01 04</span></td><td><span class="t g" style="left:187.97px;top:9px;letter-spacing:-0.34px;line-height:24px;">0.0000</span><span class="t m" style="left:214.95px;top:33px;letter-spacing:0.29px;font-size:14px;line-height:20px;">0 g</span></td><td></td><td></td><td><span class="t g" style="left:52.08px;top:9px;letter-spacing:-0.32px;line-height:24px;">0.0000</span><span class="t m" style="left:79.05px;top:33px;letter-spacing:0.34px;font-size:14px;line-height:20px;">0 g</span></td><td><span class="bl" style="left:29px;top:15px"></span><span class="br" style="left:107px;top:15px"><i></i></span><span class="t bl-t" style="left:38.26px;top:21px;letter-spacing:-0.36px;font-size:14px;line-height:21px;">Szczegóły</span></td></tr>
<tr><td><span class="t" style="left:7.8px;top:9px;letter-spacing:-0.24px;line-height:24px;">2025</span><span class="t m" style="left:7.7px;top:33px;letter-spacing:-0.21px;font-size:14px;line-height:20px;">2025-09-29 04:30 (S)</span></td><td><span class="t" style="left:7.49px;top:11px;letter-spacing:-0.02px;line-height:24px;">Podmiot 333528</span><span class="t m2" style="left:7.99px;top:31px;letter-spacing:-0.31px;font-size:14px;line-height:20px;">863534826</span></td><td><span class="t" style="left:8.18px;top:9px;letter-spacing:-0.12px;line-height:24px;">00018/2025/KEO/0001/863534826</span><span class="t" style="left:7.81px;top:33px;font-size:14px;line-height:20px;transform-origin:0 0;transform:scaleX(0.864)">EX:</span><span class="bd" style="left:30.1px;top:35.4px"></span><span class="t bt" style="left:34.62px;top:36px;letter-spacing:-0.4px;font-size:12px;line-height:16px;">NIE</span><span class="t" style="left:70.3px;top:33px;font-size:14px;line-height:20px;transform-origin:0 0;transform:scaleX(0.897)">ZS:</span><span class="bd" style="left:93.1px;top:35.4px"></span><span class="t bt" style="left:97.62px;top:36px;letter-spacing:-0.4px;font-size:12px;line-height:16px;">NIE</span></td><td><span class="t" style="left:8.17px;top:20px;letter-spacing:-0.21px;line-height:24px;">01 04 12</span></td><td><span class="t g" style="left:187.97px;top:9px;letter-spacing:-0.34px;line-height:24px;">0.0000</span><span class="t m" style="left:214.95px;top:33px;letter-spacing:0.29px;font-size:14px;line-height:20px;">0 g</span></td><td></td><td></td><td><span class="t g" style="left:52.08px;top:9px;letter-spacing:-0.32px;line-height:24px;">0.0000</span><span class="t m" style="left:79.05px;top:33px;letter-spacing:0.34px;font-size:14px;line-height:20px;">0 g</span></td><td><span class="bl" style="left:29px;top:15px"></span><span class="br" style="left:107px;top:15px"><i></i></span><span class="t bl-t" style="left:38.26px;top:21px;letter-spacing:-0.36px;font-size:14px;line-height:21px;">Szczegóły</span></td></tr>
<tr><td><span class="t" style="left:7.8px;top:9px;letter-spacing:-0.24px;line-height:24px;">2025</span><span class="t m" style="left:7.7px;top:33px;letter-spacing:-0.21px;font-size:14px;line-height:20px;">2025-09-29 04:30 (S)</span></td><td><span class="t" style="left:7.49px;top:11px;letter-spacing:-0.02px;line-height:24px;">Podmiot 333528</span><span class="t m2" style="left:7.99px;top:31px;letter-spacing:-0.31px;font-size:14px;line-height:20px;">863534826</span></td><td><span class="t" style="left:8.18px;top:9px;letter-spacing:-0.12px;line-height:24px;">00017/2025/KEO/0001/863534826</span><span class="t" style="left:7.81px;top:33px;font-size:14px;line-height:20px;transform-origin:0 0;transform:scaleX(0.864)">EX:</span><span class="bd" style="left:30.1px;top:35.4px"></span><span class="t bt" style="left:34.62px;top:36px;letter-spacing:-0.4px;font-size:12px;line-height:16px;">NIE</span><span class="t" style="left:70.3px;top:33px;font-size:14px;line-height:20px;transform-origin:0 0;transform:scaleX(0.897)">ZS:</span><span class="bd" style="left:93.1px;top:35.4px"></span><span class="t bt" style="left:97.62px;top:36px;letter-spacing:-0.4px;font-size:12px;line-height:16px;">NIE</span></td><td><span class="t" style="left:8.17px;top:20px;letter-spacing:-0.23px;line-height:24px;">02 01 10</span></td><td><span class="t g" style="left:187.97px;top:9px;letter-spacing:-0.34px;line-height:24px;">0.0000</span><span class="t m" style="left:214.95px;top:33px;letter-spacing:0.29px;font-size:14px;line-height:20px;">0 g</span></td><td></td><td></td><td><span class="t g" style="left:52.08px;top:9px;letter-spacing:-0.32px;line-height:24px;">0.0000</span><span class="t m" style="left:79.05px;top:33px;letter-spacing:0.34px;font-size:14px;line-height:20px;">0 g</span></td><td><span class="bl" style="left:29px;top:15px"></span><span class="br" style="left:107px;top:15px"><i></i></span><span class="t bl-t" style="left:38.26px;top:21px;letter-spacing:-0.36px;font-size:14px;line-height:21px;">Szczegóły</span></td></tr>
<tr><td><span class="t" style="left:7.8px;top:9px;letter-spacing:-0.24px;line-height:24px;">2025</span><span class="t m" style="left:7.7px;top:33px;letter-spacing:-0.21px;font-size:14px;line-height:20px;">2025-09-29 04:30 (S)</span></td><td><span class="t" style="left:7.49px;top:11px;letter-spacing:-0.02px;line-height:24px;">Podmiot 333528</span><span class="t m2" style="left:7.99px;top:31px;letter-spacing:-0.31px;font-size:14px;line-height:20px;">863534826</span></td><td><span class="t" style="left:8.18px;top:9px;letter-spacing:-0.12px;line-height:24px;">00016/2025/KEO/0001/863534826</span><span class="t" style="left:7.81px;top:33px;font-size:14px;line-height:20px;transform-origin:0 0;transform:scaleX(0.864)">EX:</span><span class="bd" style="left:30.1px;top:35.4px"></span><span class="t bt" style="left:34.62px;top:36px;letter-spacing:-0.4px;font-size:12px;line-height:16px;">NIE</span><span class="t" style="left:70.3px;top:33px;font-size:14px;line-height:20px;transform-origin:0 0;transform:scaleX(0.897)">ZS:</span><span class="bd" style="left:93.1px;top:35.4px"></span><span class="t bt" style="left:97.62px;top:36px;letter-spacing:-0.4px;font-size:12px;line-height:16px;">NIE</span></td><td><span class="t" style="left:8.17px;top:20px;letter-spacing:-0.04px;line-height:24px;">01 04 11</span></td><td><span class="t g" style="left:187.97px;top:9px;letter-spacing:-0.34px;line-height:24px;">0.0000</span><span class="t m" style="left:214.95px;top:33px;letter-spacing:0.29px;font-size:14px;line-height:20px;">0 g</span></td><td></td><td></td><td><span class="t g" style="left:52.08px;top:9px;letter-spacing:-0.32px;line-height:24px;">0.0000</span><span class="t m" style="left:79.05px;top:33px;letter-spacing:0.34px;font-size:14px;line-height:20px;">0 g</span></td><td><span class="bl" style="left:29px;top:15px"></span><span class="br" style="left:107px;top:15px"><i></i></span><span class="t bl-t" style="left:38.26px;top:21px;letter-spacing:-0.36px;font-size:14px;line-height:21px;">Szczegóły</span></td></tr>
</tbody></table>
<div class="menu">
<div class="hl"></div>
<span class="t" style="left:98.59px;top:13px;letter-spacing:-0.12px;line-height:24px;">Edytuj</span>
<span class="t" style="left:105.67px;top:45px;letter-spacing:-0.2px;line-height:24px;">Usuń</span>
<span class="t" style="left:52.67px;top:94px;letter-spacing:-0.16px;line-height:24px;">Synchronizuj</span>
<span class="t" style="left:17.29px;top:143px;letter-spacing:-0.35px;line-height:24px;">Pobierz kartę PDF</span>
<hr style="top:80px">
<hr style="top:129px">
</div>
<div class="sb"><div class="up"></div><div class="th"></div><div class="dn"></div></div>
</body></html>
